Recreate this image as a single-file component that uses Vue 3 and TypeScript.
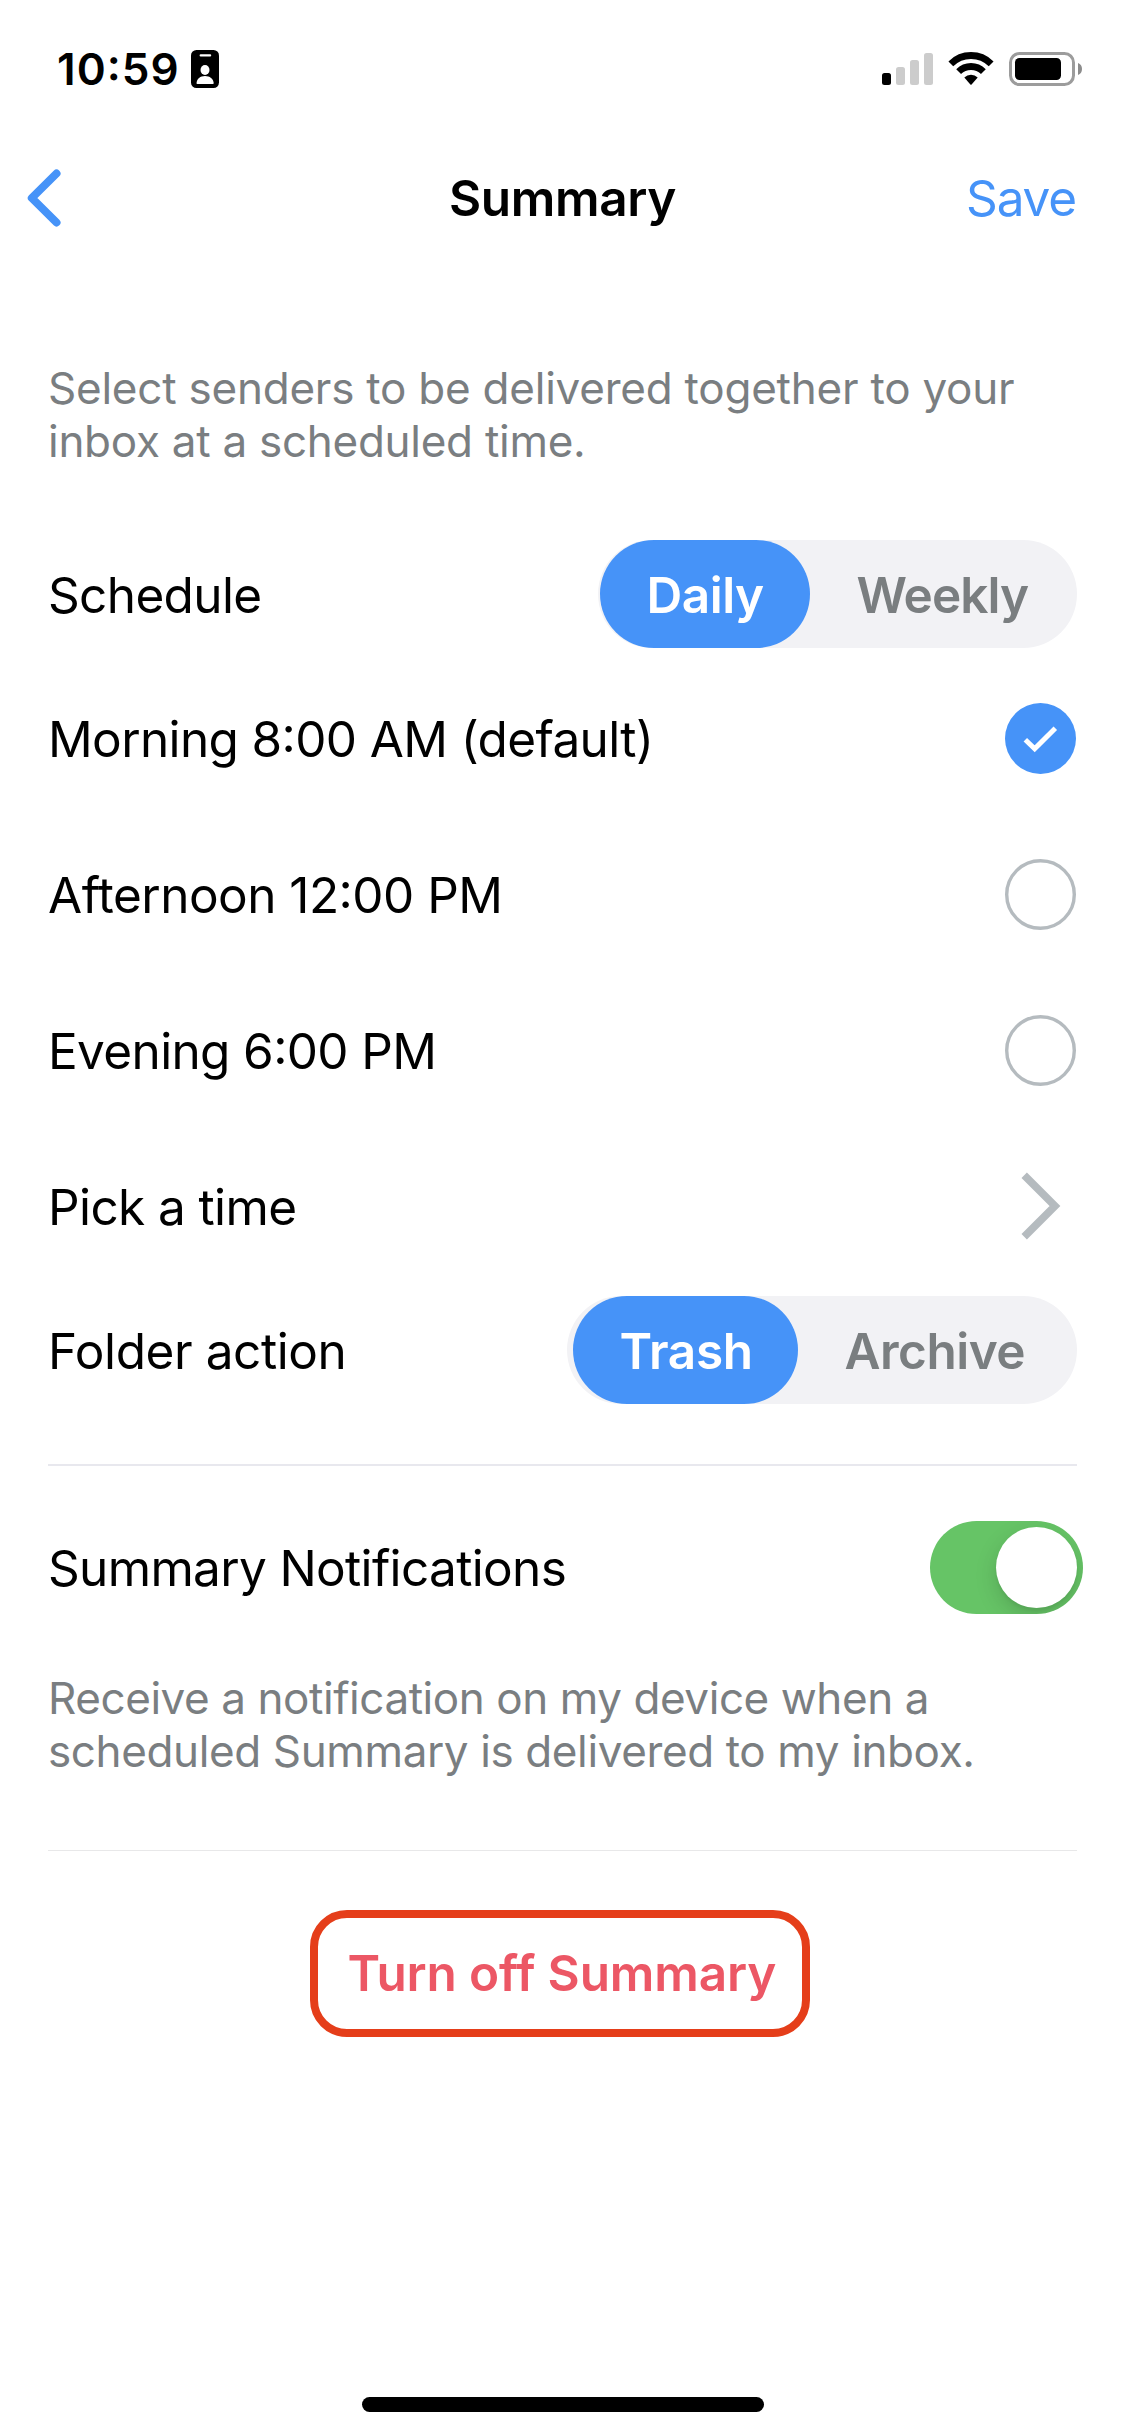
<script setup lang="ts">
import { ref } from 'vue'

interface Line { text: string; track: number }
interface TimeOption extends Line { id: string }
interface Segment extends Line { width: number }

const intro: Line[] = [
  { text: 'Select senders to be delivered together to your', track: -0.23 },
  { text: 'inbox at a scheduled time.', track: -0.27 },
]
const notice: Line[] = [
  { text: 'Receive a notification on my device when a', track: -0.43 },
  { text: 'scheduled Summary is delivered to my inbox.', track: -0.38 },
]
const times: TimeOption[] = [
  { id: 'morning', text: 'Morning 8:00 AM (default)', track: -0.62 },
  { id: 'afternoon', text: 'Afternoon 12:00 PM', track: -0.52 },
  { id: 'evening', text: 'Evening 6:00 PM', track: -0.64 },
]
const schedules: Segment[] = [
  { text: 'Daily', track: -0.5, width: 210 },
  { text: 'Weekly', track: -0.9, width: 267 },
]
const actions: Segment[] = [
  { text: 'Trash', track: -0.35, width: 225 },
  { text: 'Archive', track: -0.5, width: 279 },
]

const selectedTime = ref('morning')
const schedule = ref('Daily')
const action = ref('Trash')
const notify = ref(true)
</script>

<template>
  <main class="screen">
    <div class="status">
      <span class="clock">10:59</span>
      <svg class="badge" width="28" height="38" viewBox="0 0 28 38">
        <rect width="28" height="38" rx="5.5" fill="#000" />
        <rect x="8.6" y="4.2" width="11.6" height="2.3" rx="1.1" fill="#fff" />
        <ellipse cx="14" cy="20" rx="4.5" ry="5" fill="#fff" />
        <path d="M5.5 33.2C5.7 28.8 9.3 26 14 26s8.5 2.8 8.7 7.2q0 .8-.8.8H6.3q-.8 0-.8-.8z" fill="#fff" />
      </svg>
      <div class="indicators">
        <svg width="51" height="36" viewBox="0 0 51 36">
          <rect x="0" y="22" width="9" height="12" rx="2.5" fill="#000" />
          <rect x="14" y="16" width="9" height="18" rx="2.5" fill="#ccc" />
          <rect x="28" y="9" width="9" height="25" rx="2.5" fill="#ccc" />
          <rect x="42" y="2" width="9" height="32" rx="2.5" fill="#ccc" />
        </svg>
        <svg width="46" height="36" viewBox="0 0 46 36">
          <path d="M2.85 12.85a28.5 28.5 0 0 1 40.3 0M10.63 20.63a17.5 17.5 0 0 1 24.74 0" fill="none" stroke="#000" stroke-width="6.8" />
          <path d="M16.3 26.6a9.5 9.5 0 0 1 13.4 0L23.6 33.4q-.6.6-1.2 0z" fill="#000" />
        </svg>
        <svg width="73" height="36" viewBox="0 0 73 36">
          <rect x="1.5" y="2.5" width="63" height="31" rx="9" fill="none" stroke="#9c9c9c" stroke-width="3" />
          <rect x="6" y="7" width="46" height="22" rx="4.5" fill="#000" />
          <path d="M69 12c2.7 1 4 3.3 4 6s-1.3 5-4 6z" fill="#8c8c8c" />
        </svg>
      </div>
    </div>

    <header class="navbar">
      <button class="back" aria-label="Back">
        <svg width="34" height="58" viewBox="0 0 34 58">
          <path d="M29.5 4.5 4.8 29l24.7 24.5" fill="none" stroke="#4693f8" stroke-width="8" stroke-linecap="round" stroke-linejoin="round" />
        </svg>
      </button>
      <h1 class="title">Summary</h1>
      <button class="save">Save</button>
    </header>

    <section class="content">
      <p class="hint">
        <span v-for="line in intro" :key="line.text" class="line" :style="{ letterSpacing: line.track + 'px' }">{{ line.text }}</span>
      </p>

      <div class="row short">
        <span class="label schedule-label">Schedule</span>
        <div class="segments daily">
          <button
            v-for="s in schedules" :key="s.text" class="segment" :class="{ active: schedule === s.text }"
            :style="{ width: s.width + 'px', letterSpacing: s.track + 'px' }" @click="schedule = s.text"
          >{{ s.text }}</button>
        </div>
      </div>

      <div class="options">
        <div v-for="t in times" :key="t.id" class="row" @click="selectedTime = t.id">
          <span class="label" :style="{ letterSpacing: t.track + 'px' }">{{ t.text }}</span>
          <svg class="radio" width="71" height="71" viewBox="0 0 71 71">
            <template v-if="selectedTime === t.id">
              <circle cx="35.5" cy="35.5" r="35.5" fill="#4693f8" />
              <path d="M20.3 36.8 29.7 45.7 50.3 25.2" fill="none" stroke="#fff" stroke-width="5" />
            </template>
            <circle v-else cx="35.5" cy="35.5" r="33.8" fill="none" stroke="#b5bbbf" stroke-width="3.4" />
          </svg>
        </div>
        <div class="row">
          <span class="label pick-label">Pick a time</span>
          <svg class="more" width="40" height="68" viewBox="0 0 40 68">
            <path d="M3.2 3.2 34 34 3.2 64.8" fill="none" stroke="#b5bbbf" stroke-width="7.6" />
          </svg>
        </div>
      </div>

      <div class="row short">
        <span class="label folder-label">Folder action</span>
        <div class="segments folder">
          <button
            v-for="s in actions" :key="s.text" class="segment" :class="{ active: action === s.text }"
            :style="{ width: s.width + 'px', letterSpacing: s.track + 'px' }" @click="action = s.text"
          >{{ s.text }}</button>
        </div>
      </div>

      <hr class="rule" />

      <div class="row notify">
        <span class="label notify-label">Summary Notifications</span>
        <button class="toggle" :class="{ on: notify }" aria-label="Summary Notifications" @click="notify = !notify">
          <span class="knob"></span>
        </button>
      </div>

      <p class="hint second">
        <span v-for="line in notice" :key="line.text" class="line" :style="{ letterSpacing: line.track + 'px' }">{{ line.text }}</span>
      </p>

      <hr class="rule thin" />

      <button class="turn-off">Turn off Summary</button>
    </section>

    <div class="home"></div>
  </main>
</template>

<style>
html,
body {
  margin: 0;
  background: #fff;
}
</style>

<style scoped>
.screen {
  display: flex;
  flex-direction: column;
  width: 1125px;
  height: 2436px;
  overflow: hidden;
  background: #fff;
  color: #000;
  font-family: Inter, 'Liberation Sans', sans-serif;
  font-size: 49.5px;
  font-feature-settings: 'calt' 1;
}
button {
  padding: 0;
  border: 0;
  background: none;
  font: inherit;
  font-feature-settings: inherit;
  color: inherit;
  text-align: left;
  white-space: nowrap;
}
svg {
  display: block;
  flex: none;
}

.status {
  box-sizing: border-box;
  display: flex;
  align-items: center;
  height: 132px;
  padding: 6px 43px 0 57px;
}
.clock {
  font-size: 44px;
  font-weight: 600;
  letter-spacing: 1.05px;
}
.badge {
  margin-left: 11.5px;
}
.indicators {
  display: flex;
  gap: 15px;
  margin-left: auto;
}

.navbar {
  display: grid;
  grid-template-columns: 1fr auto 1fr;
  align-items: center;
  height: 132px;
}
.back {
  justify-self: start;
  padding-left: 27px;
}
.title {
  margin: 0;
  font-size: inherit;
  font-weight: 600;
  letter-spacing: -0.37px;
}
.save {
  justify-self: end;
  padding-right: 49px;
  color: #4693f8;
  letter-spacing: -1.15px;
}

.content {
  display: flex;
  flex-direction: column;
  padding: 98px 48px 0;
}
.hint {
  margin: 0 0 72px;
  color: #7a7e81;
  font-size: 44px;
  line-height: 53px;
}
.line {
  display: block;
  white-space: nowrap;
}
.row {
  display: flex;
  align-items: center;
  justify-content: space-between;
  height: 156px;
}
.row.short {
  height: 108px;
}
.options {
  margin: 12px 0;
}
.label {
  padding-top: 2px;
  white-space: nowrap;
}
.schedule-label {
  letter-spacing: -0.64px;
}
.pick-label {
  letter-spacing: -0.6px;
}
.folder-label {
  letter-spacing: -0.42px;
}
.notify-label {
  letter-spacing: -0.66px;
}
.radio {
  margin-right: 0.7px;
}
.more {
  margin-right: 15.7px;
}

.segments {
  display: flex;
  height: 108px;
  border-radius: 54px;
  background: #f2f2f5;
}
.segments.daily {
  padding-left: 2px;
}
.segments.folder {
  padding-left: 6px;
}
.segment {
  box-sizing: border-box;
  padding: 1px 0 0 46.5px;
  border-radius: 54px;
  color: #7a7e80;
  font-weight: 600;
}
.segment.active {
  background: #4693f8;
  color: #fff;
}

.rule {
  width: 100%;
  height: 2px;
  margin: 60px 0 0;
  border: 0;
  background: #e8e8ee;
}
.row.notify {
  height: 94px;
  margin-top: 54px;
}
.toggle {
  box-sizing: border-box;
  width: 153px;
  height: 93px;
  margin-right: -6px;
  padding: 6px;
  border-radius: 47px;
  background: #e5e5ea;
  overflow: hidden;
}
.toggle.on {
  display: flex;
  justify-content: flex-end;
  background: #66c466;
}
.knob {
  display: block;
  width: 81px;
  height: 81px;
  border-radius: 50%;
  background: #fff;
  box-shadow: 0 8px 22px rgba(0, 0, 0, 0.15), 0 3px 3px rgba(0, 0, 0, 0.05);
}
.hint.second {
  margin: 58px 0 72px;
}
.rule.thin {
  height: 1px;
  margin: 0;
  background: #e8e8e9;
}
.turn-off {
  box-sizing: border-box;
  align-self: flex-start;
  width: 500px;
  height: 127px;
  margin: 59px 0 0 262px;
  padding: 0 0 2px 29.5px;
  border: 8px solid #e53e1a;
  border-radius: 37px;
  color: #ec5765;
  font-weight: 600;
  letter-spacing: -0.13px;
}
.home {
  width: 402px;
  height: 15px;
  margin: auto 0 24px 362px;
  border-radius: 8px;
  background: #000;
}
</style>
